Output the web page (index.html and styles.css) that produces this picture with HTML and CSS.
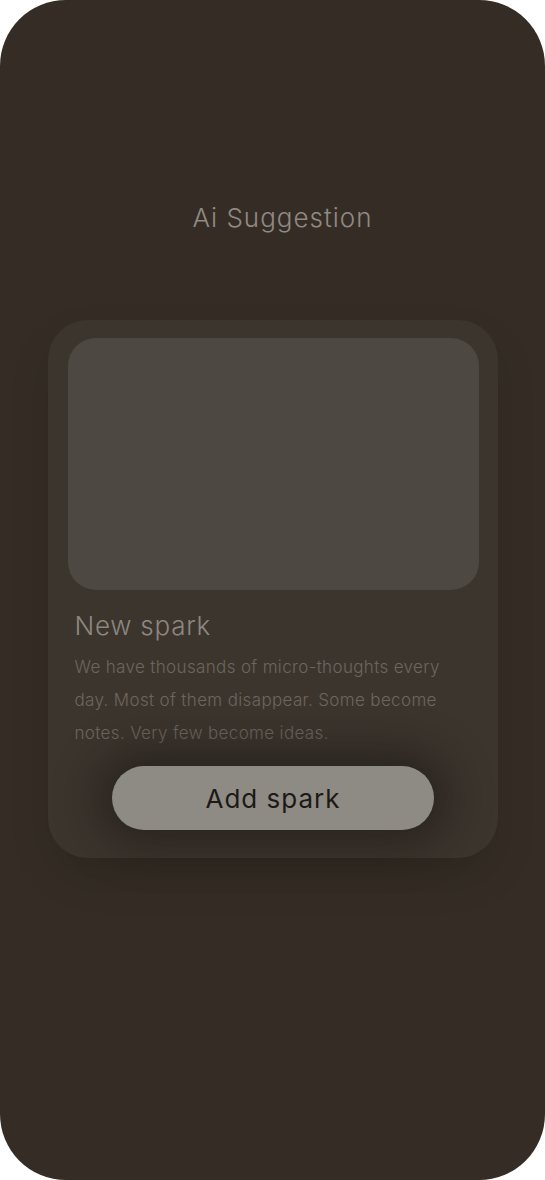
FILE: index.html
```html
<!DOCTYPE html>
<html lang="en">
<head>
<meta charset="utf-8">
<title>Ai Suggestion</title>
<link rel="stylesheet" href="styles.css">
</head>
<body>
<div class="phone">
  <h1 class="title">Ai Suggestion</h1>
  <section class="card">
    <div class="media"></div>
    <h2 class="card-title">New spark</h2>
    <p class="card-text">We have thousands of micro-thoughts every day. Most of them disappear. Some become notes. Very few become ideas.</p>
    <button class="cta" type="button">Add spark</button>
  </section>
</div>
</body>
</html>
```
FILE: styles.css
```css
html, body {
  margin: 0;
  padding: 0;
  background: #ffffff;
}
.phone {
  width: 545px;
  height: 1180px;
  border-radius: 66px;
  background: #352d25;
  box-sizing: border-box;
  padding-top: 202px;
  display: flex;
  flex-direction: column;
  align-items: center;
  font-family: "Inter", "Open Sans", sans-serif;
}
.title {
  margin: 0 0 0 20px;
  font-size: 26px;
  line-height: 32px;
  font-weight: 300;
  letter-spacing: 1px;
  color: #8f8a83;
}
.card {
  margin-top: 86px;
  width: 450px;
  box-sizing: border-box;
  padding: 18px 19px 28px 20px;
  border-radius: 40px;
  background: #3c352e;
  box-shadow: 0 20px 40px rgba(0, 0, 0, 0.12);
  display: flex;
  flex-direction: column;
}
.media {
  height: 252px;
  border-radius: 28px;
  background: #4d4841;
}
.card-title {
  margin: 20px 0 0 7px;
  font-size: 26px;
  line-height: 32px;
  font-weight: 300;
  letter-spacing: 0.75px;
  color: #8c877f;
}
.card-text {
  margin: 9px 0 0 7px;
  max-width: 380px;
  font-size: 17px;
  line-height: 33px;
  font-weight: 300;
  letter-spacing: 0.35px;
  color: #6d665e;
}
.cta {
  align-self: center;
  margin-top: 16px;
  width: 322px;
  height: 64px;
  border: 0;
  border-radius: 32px;
  background: #8e8b85;
  color: #1d1915;
  font-family: inherit;
  font-size: 26px;
  font-weight: 400;
  letter-spacing: 1px;
  box-shadow: 0 0 44px 16px rgba(20, 16, 12, 0.45);
}
```
